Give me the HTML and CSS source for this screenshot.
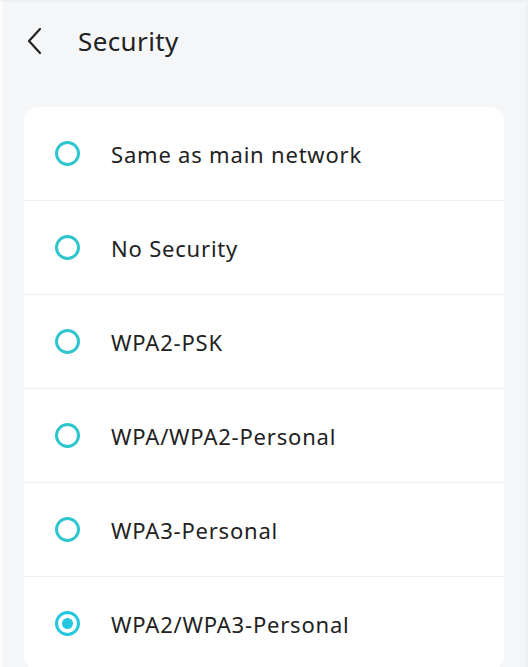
FILE: index.html
```html
<!DOCTYPE html>
<html lang="en">
<head>
<meta charset="utf-8">
<title>Security</title>
<link rel="stylesheet" href="styles.css">
</head>
<body>
<div class="page">
  <header class="topbar">
    <button class="back" aria-label="Back">
      <svg width="16" height="28" viewBox="0 0 16 28"><path d="M14 2 L3 14 L14 26" fill="none" stroke="#222" stroke-width="2.2" stroke-linecap="round" stroke-linejoin="round"/></svg>
    </button>
    <h1 class="title">Security</h1>
  </header>
  <ul class="card">
    <li class="row"><span class="radio"></span><span class="label">Same as main network</span></li>
    <li class="row"><span class="radio"></span><span class="label">No Security</span></li>
    <li class="row"><span class="radio"></span><span class="label">WPA2-PSK</span></li>
    <li class="row"><span class="radio"></span><span class="label">WPA/WPA2-Personal</span></li>
    <li class="row"><span class="radio"></span><span class="label">WPA3-Personal</span></li>
    <li class="row"><span class="radio checked"></span><span class="label">WPA2/WPA3-Personal</span></li>
  </ul>
</div>
</body>
</html>
```
FILE: styles.css
```css
html, body {
  margin: 0;
  padding: 0;
  height: 100%;
  overflow: hidden;
}
body {
  background: #f5f6f8;
  font-family: "Noto Sans", "DejaVu Sans", sans-serif;
  color: #222;
}
.page {
  height: 100%;
  border-left: 3px solid #fbfbfc;
  border-top: 2px solid #eef0f2;
  border-right: 3px solid #f0f1f4;
  box-sizing: border-box;
  padding: 0 21px 0 21px;
}
.topbar {
  display: flex;
  align-items: center;
  height: 78px;
}
.back {
  background: none;
  border: 0;
  padding: 0;
  margin-left: 2px;
  width: 16px;
  height: 28px;
  display: flex;
}
.title {
  margin: 0 0 0 36px;
  font-size: 26px;
  font-weight: 400;
  letter-spacing: 0.4px;
  color: #222;
}
.card {
  list-style: none;
  margin: 27px 0 0 0;
  padding: 0;
  background: #fff;
  border-radius: 14px;
}
.row {
  display: flex;
  align-items: center;
  height: 93px;
  padding-left: 31px;
}
.row + .row {
  border-top: 1px solid #eff0f2;
}
.radio {
  width: 19px;
  height: 19px;
  border: 3px solid #2ec5cc;
  border-radius: 50%;
  display: flex;
  align-items: center;
  justify-content: center;
  flex: none;
}
.radio.checked {
  border-color: #25c7de;
}
.radio.checked::after {
  content: "";
  width: 11px;
  height: 11px;
  border-radius: 50%;
  background: #25c7de;
}
.label {
  margin-left: 31px;
  font-size: 22px;
  letter-spacing: 0.8px;
  color: #222;
}
```
